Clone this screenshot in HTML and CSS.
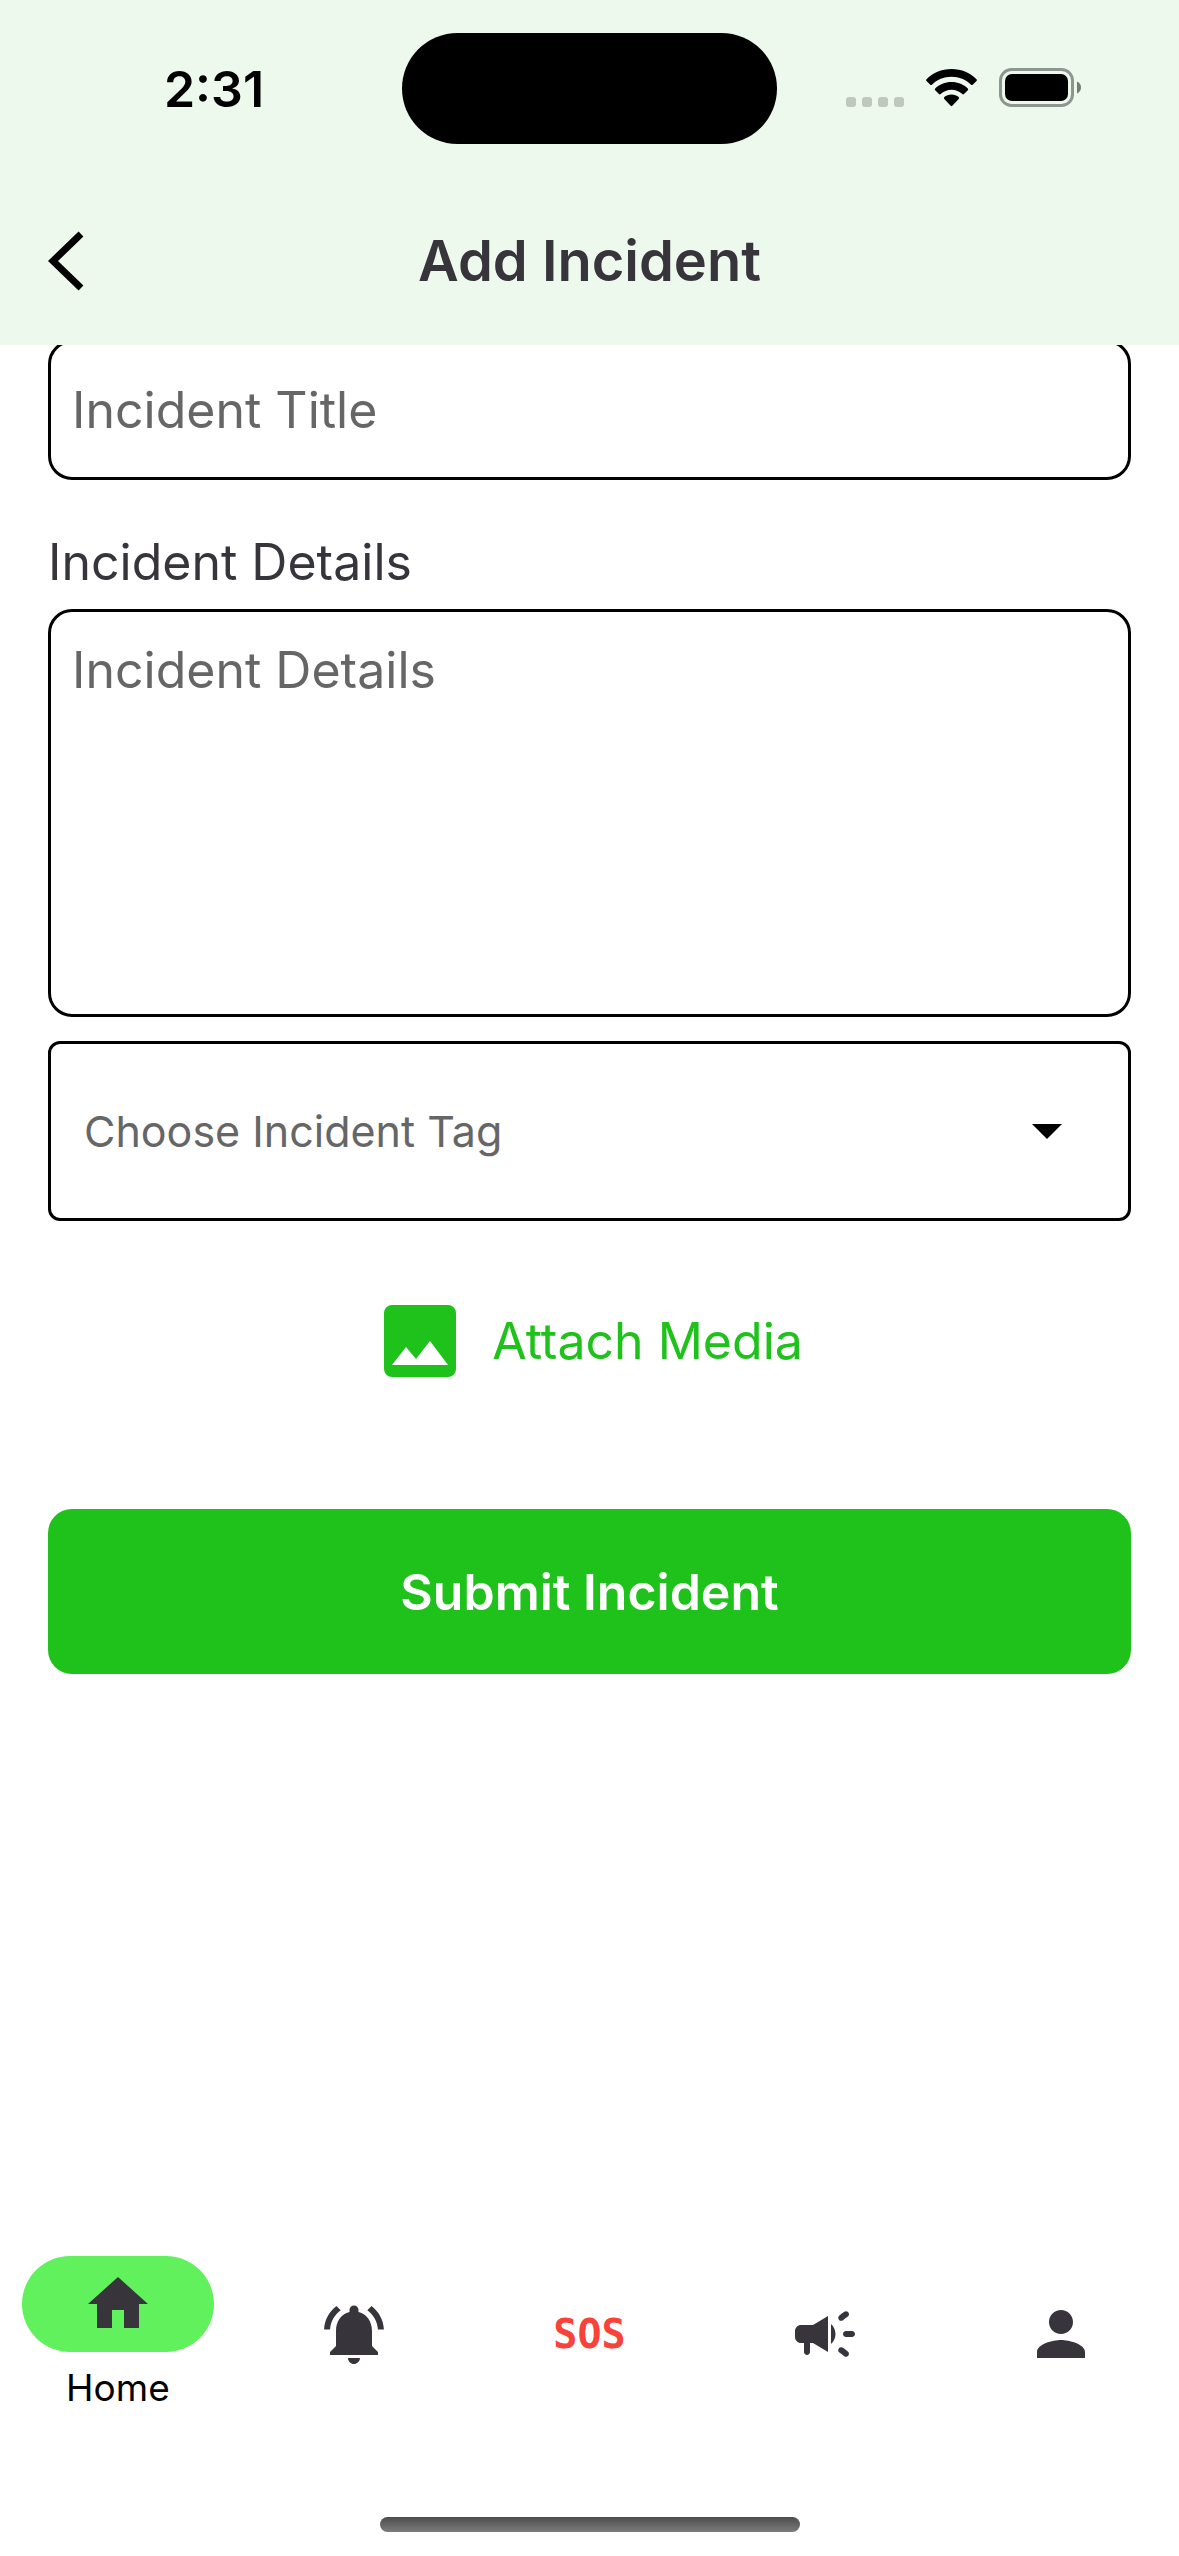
FILE: index.html
```html
<!DOCTYPE html>
<html lang="en">
<head>
<meta charset="utf-8">
<meta name="viewport" content="width=device-width, initial-scale=1">
<title>Add Incident</title>
<link rel="stylesheet" href="styles.css">
</head>
<body>
<header class="header">
  <div class="status">
    <time class="clock">2:31</time>
    <div class="island"></div>
    <div class="indicators">
      <svg class="dots" viewBox="0 0 58 10" aria-hidden="true"><rect width="10" height="10" rx="3"/><rect x="16" width="10" height="10" rx="3"/><rect x="32" width="10" height="10" rx="3"/><rect x="48" width="10" height="10" rx="3"/></svg>
      <svg class="wifi" viewBox="0 0 51 38" aria-hidden="true"><path d="M25.500 0C15.500 0 6.500 4 0.500 10.200q-.8.900 0 1.700l3.800 3.800q.8.700 1.600 0C11 10.800 17.800 7.800 25.500 7.800s14.500 3 19.600 7.900q.8.700 1.600 0l3.800-3.800q.8-.8 0-1.700C44.500 4 35.500 0 25.500 0z"/><path d="M25.500 13C19 13 13.300 15.500 9.200 19.400q-.9.900 0 1.800l3.800 3.800q.8.800 1.700 0c2.800-2.600 6.600-4.200 10.800-4.200s8 1.600 10.800 4.200q.9.800 1.700 0l3.800-3.800q.9-.9 0-1.800C37.700 15.500 32 13 25.500 13z"/><path d="M25.500 25.500c-2.800 0-5.300 1-7.200 2.600q-.9.900 0 1.900l6.400 6.800q.8.800 1.600 0l6.400-6.800q.9-1 0-1.900c-1.900-1.600-4.400-2.600-7.200-2.600z"/></svg>
      <svg class="battery" viewBox="0 0 82 39" aria-hidden="true"><rect x="1.500" y="1.500" width="72" height="36" rx="11" fill="none" stroke="#000" stroke-opacity=".4" stroke-width="3"/><rect x="6" y="6" width="63" height="27" rx="7"/><path d="M78 13.500c2.600 1 4 3.400 4 6s-1.400 5-4 6z" fill-opacity=".5"/></svg>
    </div>
  </div>
  <div class="appbar">
    <button class="back" type="button" aria-label="Back"><svg viewBox="0 0 36 60"><path d="M33 3L5 30l28 27" fill="none" stroke="#000" stroke-width="7"/></svg></button>
    <h1 class="title">Add Incident</h1>
  </div>
</header>

<main class="content">
  <form class="form">
    <input class="field" type="text" placeholder="Incident Title" aria-label="Incident Title">
    <label class="label" for="details">Incident Details</label>
    <textarea class="field details" id="details" placeholder="Incident Details"></textarea>
    <div class="picker">
      <select class="select" aria-label="Incident tag"><option>Choose Incident Tag</option></select>
      <svg class="caret" viewBox="0 0 30 15" aria-hidden="true"><path d="M0 0h30L15 15z"/></svg>
    </div>
    <button class="attach" type="button">
      <svg viewBox="0 0 72 72" aria-hidden="true"><path fill-rule="evenodd" d="M8 0h56a8 8 0 0 1 8 8v56a8 8 0 0 1-8 8H8a8 8 0 0 1-8-8V8a8 8 0 0 1 8-8zM8 60h56L46 36 32 54 22 42z"/></svg>
      <span>Attach Media</span>
    </button>
    <button class="submit" type="submit">Submit Incident</button>
  </form>
</main>

<footer class="footer">
  <nav class="nav">
    <a class="tab" href="#home" aria-current="page">
      <span class="pill"><svg class="icon" viewBox="0 0 24 24"><path d="M10 20v-6h4v6h5v-8h3L12 3 2 12h3v8z"/></svg></span>
      <span class="tab-label">Home</span>
    </a>
    <a class="tab" href="#alerts" aria-label="Alerts"><svg class="icon" viewBox="0 0 24 24"><path d="M7.580 4.080L6.150 2.650C3.750 4.480 2.170 7.300 2.030 10.500h2c.15-2.650 1.510-4.970 3.550-6.420zM19.970 10.500h2c-.15-3.200-1.730-6.020-4.120-7.850l-1.420 1.430c2.020 1.450 3.390 3.770 3.540 6.420zM18 11c0-3.070-1.640-5.640-4.500-6.320V4c0-.83-.67-1.500-1.500-1.500s-1.500.67-1.500 1.500v.68C7.630 5.360 6 7.920 6 11v5l-2 2v1h16v-1l-2-2v-5zM12 22c.14 0 .27-.01.4-.04.65-.14 1.180-.58 1.440-1.180.1-.24.15-.5.15-.78h-4c.01 1.100.9 2 2.010 2z"/></svg></a>
    <a class="tab sos" href="#sos">SOS</a>
    <a class="tab" href="#announcements" aria-label="Announcements"><svg class="icon" viewBox="0 0 24 24"><path d="M18 12c0-.55.45-1 1-1h2c.55 0 1 .45 1 1s-.45 1-1 1h-2c-.55 0-1-.45-1-1zM16.590 16.820c-.33.440-.24 1.050.2 1.370.53.390 1.090.810 1.620 1.210.44.330 1.060.240 1.380-.2 0-.01 0-.01.010-.01.330-.440.240-1.060-.2-1.380-.53-.4-1.090-.820-1.610-1.210-.44-.33-1.060-.23-1.390.21 0 .01-.01.010-.010.010zM19.810 4.810c0-.01-.01-.01-.010-.010-.33-.44-.95-.53-1.380-.2-.53.4-1.100.820-1.620 1.220-.44.330-.52.950-.19 1.380 0 .01 0 .01.010.010.33.440.94.530 1.380.2.530-.39 1.090-.820 1.620-1.220.430-.32.510-.94.190-1.380zM8 9H4c-1.100 0-2 .9-2 2v2c0 1.100.9 2 2 2h1v3c0 .55.45 1 1 1s1-.45 1-1v-3h1l5 3V6L8 9zM15.500 12c0-1.330-.58-2.530-1.500-3.350v6.690c.92-.81 1.500-2.010 1.500-3.340z"/></svg></a>
    <a class="tab" href="#profile" aria-label="Profile"><svg class="icon" viewBox="0 0 24 24"><path d="M12 12c2.210 0 4-1.790 4-4s-1.790-4-4-4-4 1.790-4 4 1.790 4 4 4zm0 2c-2.670 0-8 1.340-8 4v2h16v-2c0-2.660-5.330-4-8-4z"/></svg></a>
  </nav>
  <div class="home-bar"></div>
</footer>
</body>
</html>
```
FILE: styles.css
```css
* {
  box-sizing: border-box;
}

body {
  margin: 0;
  min-height: 100vh;
  display: flex;
  flex-direction: column;
  background: #fff;
  color: #38343c;
  font-family: Inter, "Liberation Sans", sans-serif;
  font-size: 50px;
  line-height: 60px;
}

button,
input,
select,
textarea {
  margin: 0;
  padding: 0;
  border: 0;
  background: none;
  color: inherit;
  font: inherit;
}

svg {
  display: block;
  flex: none;
}

.header {
  background: #eef9ee;
}

.status {
  height: 177px;
  padding: 33px 0;
  display: grid;
  grid-template-columns: 1fr 375px 1fr;
}

.clock {
  align-self: center;
  padding-left: 26px;
  text-align: center;
  color: #000;
  font-weight: 600;
}

.island {
  height: 111px;
  border-radius: 56px;
  background: #000;
}

.indicators {
  display: flex;
  align-items: flex-end;
  justify-content: flex-end;
  gap: 22px;
  padding: 0 98px 37px 0;
}

.dots {
  width: 58px;
  height: 10px;
  fill: #bec8be;
}

.wifi {
  width: 51px;
  height: 38px;
}

.battery {
  width: 82px;
  height: 39px;
}

.appbar {
  height: 168px;
  padding: 0 48px;
  display: grid;
  grid-template-columns: 72px 1fr 72px;
  align-items: center;
}

.back {
  width: 72px;
  height: 72px;
  display: flex;
  align-items: center;
}

.back svg {
  width: 36px;
  height: 60px;
}

.title {
  margin: 0;
  text-align: center;
  font-size: 56px;
  font-weight: 600;
}

.content {
  flex: 1;
  overflow: hidden;
}

/* The form is scrolled slightly under the header. */
.form {
  margin-top: -5px;
  padding: 0 48px;
  display: flex;
  flex-direction: column;
}

.field {
  display: block;
  width: 100%;
  height: 140px;
  padding: 0 21px;
  border: 3px solid #000;
  border-radius: 24px;
}

.field::placeholder {
  color: #666;
  opacity: 1;
}

.label {
  margin: 52px 0 17px;
}

.details {
  height: 408px;
  padding: 28px 21px;
  resize: none;
}

.picker {
  margin-top: 24px;
  display: grid;
  align-items: center;
}

.select {
  grid-area: 1 / 1;
  width: 100%;
  height: 180px;
  padding: 0 33px;
  border: 3px solid #000;
  border-radius: 12px;
  appearance: none;
  color: #666;
  font-size: 43px;
}

.caret {
  grid-area: 1 / 1;
  justify-self: end;
  width: 30px;
  height: 15px;
  margin-right: 69px;
  pointer-events: none;
}

.attach {
  align-self: center;
  height: 120px;
  margin: 60px 0 108px;
  padding-left: 8px;
  display: flex;
  align-items: center;
  gap: 36px;
  color: #1fc11b;
}

.attach svg {
  width: 72px;
  height: 72px;
  fill: currentColor;
}

.submit {
  height: 165px;
  border-radius: 24px;
  background: #1fc11b;
  color: #fff;
  font-weight: 600;
}

.footer {
  display: flex;
  flex-direction: column;
  align-items: center;
}

.nav {
  width: 100%;
  height: 240px;
  display: grid;
  grid-template-columns: repeat(5, 1fr);
}

.tab {
  display: flex;
  flex-direction: column;
  align-items: center;
  justify-content: center;
  gap: 12px;
  color: #38343c;
  text-decoration: none;
}

.icon {
  width: 72px;
  height: 72px;
  fill: currentColor;
}

.pill {
  width: 192px;
  height: 96px;
  display: flex;
  align-items: center;
  justify-content: center;
  border-radius: 48px;
  background: #60f15c;
}

.tab-label {
  color: #000;
  font-size: 37px;
  line-height: 48px;
}

.sos {
  color: #f9423a;
  font-family: "DejaVu Sans Mono", monospace;
  font-size: 40px;
  font-weight: 700;
}

.home-bar {
  width: 420px;
  height: 15px;
  margin: 63px 0 24px;
  border-radius: 8px;
  background: linear-gradient(#4c4c4c, #7c7c7c);
}
```
